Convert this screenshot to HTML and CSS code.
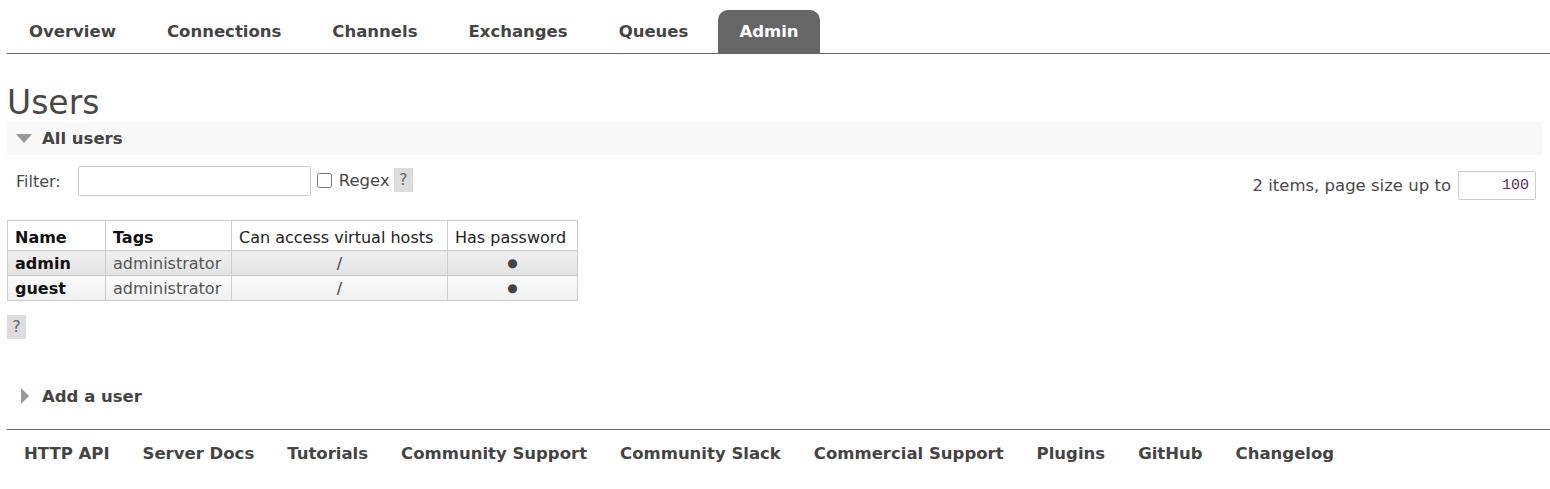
FILE: index.html
```html
<!DOCTYPE html>
<html>
<head>
<meta charset="utf-8">
<link rel="stylesheet" href="styles.css">
</head>
<body>
<div class="page">
  <nav class="menu">
    <a class="tab">Overview</a>
    <a class="tab">Connections</a>
    <a class="tab">Channels</a>
    <a class="tab">Exchanges</a>
    <a class="tab">Queues</a>
    <a class="tab selected">Admin</a>
  </nav>

  <main class="main">
    <h1 class="title">Users</h1>
    <div class="section">
      <div class="section-head">
        <span class="tri-down"></span>
        <span class="section-title">All users</span>
      </div>
      <div class="section-body">
        <div class="filter-row">
          <div class="filter-left">
            <label class="filter-label">Filter:</label>
            <input class="filter-input" type="text">
            <label class="regex"><input type="checkbox" class="chk"> Regex</label>
            <span class="help">?</span>
          </div>
          <div class="filter-right">
            <span>2 items, page size up to</span>
            <input class="page-size" type="text" value="100">
          </div>
        </div>

        <table class="list">
          <thead>
            <tr>
              <th class="b c-name">Name</th>
              <th class="b c-tags">Tags</th>
              <th class="c-vh">Can access virtual hosts</th>
              <th class="c-pw">Has password</th>
            </tr>
          </thead>
          <tbody>
            <tr class="alt1">
              <td class="b">admin</td>
              <td class="muted">administrator</td>
              <td class="center">/</td>
              <td class="center dot">●</td>
            </tr>
            <tr class="alt2">
              <td class="b">guest</td>
              <td class="muted">administrator</td>
              <td class="center">/</td>
              <td class="center dot">●</td>
            </tr>
          </tbody>
        </table>
        <span class="help help-below">?</span>
      </div>
    </div>

    <div class="section collapsed">
      <div class="section-head plain">
        <span class="tri-right"></span>
        <span class="section-title">Add a user</span>
      </div>
    </div>
  </main>

  <footer class="footer">
    <a>HTTP API</a>
    <a>Server Docs</a>
    <a>Tutorials</a>
    <a>Community Support</a>
    <a>Community Slack</a>
    <a>Commercial Support</a>
    <a>Plugins</a>
    <a>GitHub</a>
    <a>Changelog</a>
  </footer>
</div>
</body>
</html>
```

FILE: styles.css
```css
html, body {
  margin: 0;
  padding: 0;
  background: #fff;
}
body {
  font-family: "DejaVu Sans", Verdana, sans-serif;
  font-size: 16px;
  color: #484848;
}
.page {
  padding: 10px 0 0 7px;
}
.menu {
  display: flex;
  gap: 9px;
  border-bottom: 1px solid #666;
  padding-left: 1px;
}
.tab {
  display: block;
  padding: 10px 21px 0;
  box-sizing: border-box;
  line-height: 23px;
  height: 43px;
  font-weight: bold;
  font-size: 16.5px;
  color: #444;
  border-radius: 10px 10px 0 0;
}
.tab.selected {
  background: #666;
  color: #fff;
}
.main {
  padding-right: 8px;
}
.title {
  margin: 30px 0 0 0;
  font-size: 33px;
  font-weight: normal;
  line-height: 38px;
  color: #484848;
}
.section-head {
  display: flex;
  align-items: center;
  height: 33px;
  background: #f8f8f8;
  padding-left: 9px;
}
.section-head.plain {
  background: none;
}
.tri-down {
  width: 0;
  height: 0;
  border-left: 8px solid transparent;
  border-right: 8px solid transparent;
  border-top: 9px solid #999;
  margin-right: 10px;
}
.tri-right {
  width: 0;
  height: 0;
  border-top: 8px solid transparent;
  border-bottom: 8px solid transparent;
  border-left: 8px solid #999;
  margin-left: 5px;
  margin-right: 13px;
}
.section-title {
  font-weight: bold;
  font-size: 16.5px;
  color: #444;
}
.filter-row {
  display: flex;
  justify-content: space-between;
  align-items: flex-start;
  padding-top: 11px;
}
.filter-left {
  display: flex;
  align-items: center;
  padding-left: 8px;
}
.filter-label {
  margin-right: 17px;
  margin-left: 1px;
}
.filter-input {
  width: 233px;
  height: 30px;
  box-sizing: border-box;
  border: 1px solid #ccc;
  border-radius: 2px;
  margin: 0;
  padding: 0 4px;
  font: inherit;
}
.regex {
  display: flex;
  align-items: center;
  margin-left: 6px;
  gap: 7px;
  margin-top: -2px;
  font-size: 16.5px;
}
.chk {
  width: 15px;
  height: 15px;
  margin: 0;
}
.help {
  display: inline-block;
  background: #ddd;
  color: #666;
  width: 19px;
  height: 24px;
  line-height: 24px;
  text-align: center;
  font-size: 16px;
  margin-left: 4px;
  margin-top: -3px;
}
.filter-right {
  display: flex;
  align-items: center;
  gap: 7px;
  padding-top: 5px;
  padding-right: 6px;
  font-size: 16.5px;
}
.page-size {
  width: 78px;
  height: 29px;
  box-sizing: border-box;
  border: 1px solid #ccc;
  border-radius: 2px;
  margin: 0;
  padding: 0 6px;
  text-align: right;
  font-family: "Liberation Mono", "DejaVu Sans Mono", monospace;
  font-size: 15px;
  color: #5a2a5a;
}
.list {
  border-collapse: collapse;
  margin-top: 20px;
  border: 1px solid #ccc;
}
.list th, .list td {
  border: 1px solid #ccc;
  padding: 0 7px;
  text-align: left;
  font-weight: normal;
  white-space: nowrap;
  color: #222;
}
.list th {
  height: 30px;
  vertical-align: middle;
  padding-top: 3px;
  box-sizing: border-box;
}
.list td {
  height: 24px;
}
.list .b {
  font-weight: bold;
  color: #111;
}
.list .muted {
  color: #555;
}
.list .center {
  text-align: center;
  color: #444;
}
.list .dot {
  font-size: 12px;
}
.c-name { width: 98px; }
.c-tags { width: 126px; }
.c-vh { width: 216px; }
.c-pw { width: 130px; }
.alt1 td {
  background: linear-gradient(#f0f0f0, #e2e2e2);
}
.alt2 td {
  background: linear-gradient(#fbfbfb, #f0f0f0);
}
.help-below {
  display: block;
  margin: 14px 0 0 0;
}
.collapsed {
  margin-top: 42px;
}
.collapsed .section-head {
  height: 30px;
}
.footer {
  margin-top: 18px;
  border-top: 1px solid #666;
  display: flex;
  gap: 33px;
  padding: 14px 0 0 17px;
  height: 50px;
  box-sizing: border-box;
}
.footer a {
  font-weight: bold;
  color: #444;
  font-size: 16.5px;
}
```
